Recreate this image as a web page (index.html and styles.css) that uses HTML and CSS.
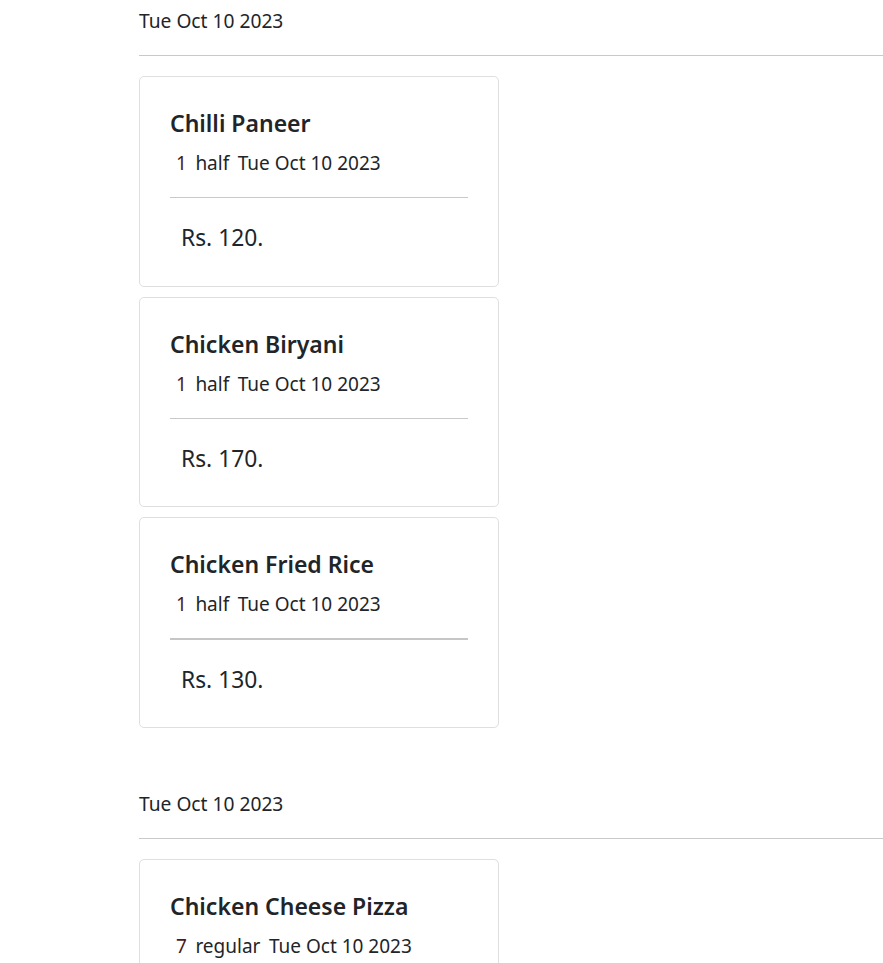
FILE: index.html
```html
<!DOCTYPE html>
<html lang="en">
<head>
<meta charset="utf-8">
<title>Orders</title>
<link rel="stylesheet" href="styles.css">
</head>
<body>
<main class="orders">
  <section class="day">
    <div class="day-date">Tue Oct 10 2023</div>
    <hr class="day-rule">
    <div class="cards">
      <article class="card">
        <h5 class="card-title">Chilli Paneer</h5>
        <div class="card-meta"><span class="qty">1</span><span>half</span><span>Tue Oct 10 2023</span></div>
        <hr class="card-rule">
        <p class="card-price">Rs. 120.</p>
      </article>
      <article class="card">
        <h5 class="card-title">Chicken Biryani</h5>
        <div class="card-meta"><span class="qty">1</span><span>half</span><span>Tue Oct 10 2023</span></div>
        <hr class="card-rule">
        <p class="card-price">Rs. 170.</p>
      </article>
      <article class="card">
        <h5 class="card-title">Chicken Fried Rice</h5>
        <div class="card-meta"><span class="qty">1</span><span>half</span><span>Tue Oct 10 2023</span></div>
        <hr class="card-rule card-rule-dark">
        <p class="card-price">Rs. 130.</p>
      </article>
    </div>
  </section>
  <section class="day">
    <div class="day-date">Tue Oct 10 2023</div>
    <hr class="day-rule">
    <div class="cards">
      <article class="card">
        <h5 class="card-title">Chicken Cheese Pizza</h5>
        <div class="card-meta"><span class="qty">7</span><span>regular</span><span>Tue Oct 10 2023</span></div>
        <hr class="card-rule">
        <p class="card-price">Rs. 350.</p>
      </article>
    </div>
  </section>
</main>
</body>
</html>
```
FILE: styles.css
```css
html, body {
  margin: 0;
  padding: 0;
  background: #ffffff;
}
body {
  font-family: "Noto Sans", "Open Sans", sans-serif;
  color: #212529;
  overflow: hidden;
}
.orders {
  padding-left: 139px;
  display: flex;
  flex-direction: column;
  gap: 55px;
}
.day-date {
  height: 42px;
  line-height: 42px;
  font-size: 19.2px;
}
.day-rule {
  margin: 13px 0 20px;
  border: 0;
  border-top: 1px solid #c9c9c9;
  height: 0;
}
.cards {
  display: flex;
  flex-direction: column;
  gap: 10px;
}
.card {
  box-sizing: border-box;
  width: 360px;
  height: 210.5px;
  border: 1px solid #dfdfdf;
  border-radius: 5px;
  padding: 30px 30px 0;
}
.card-title {
  margin: 0;
  font-size: 23px;
  font-weight: 600;
  line-height: 32px;
}
.card-meta {
  margin-top: 10px;
  line-height: 28px;
  font-size: 19px;
  display: flex;
  gap: 8.5px;
  padding-left: 6px;
}
.qty {
  color: #4a1a1a;
}
.card-rule {
  margin: 20px 0 0;
  border: 0;
  border-top: 1px solid #c9c9c9;
  height: 0;
}
.card-rule-dark {
  border-top: 2px solid #c6c6c6;
  margin-top: 19.5px;
}
.card-price {
  margin: 25px 0 0;
  padding-left: 11px;
  line-height: 30px;
  font-size: 22.8px;
}
```
